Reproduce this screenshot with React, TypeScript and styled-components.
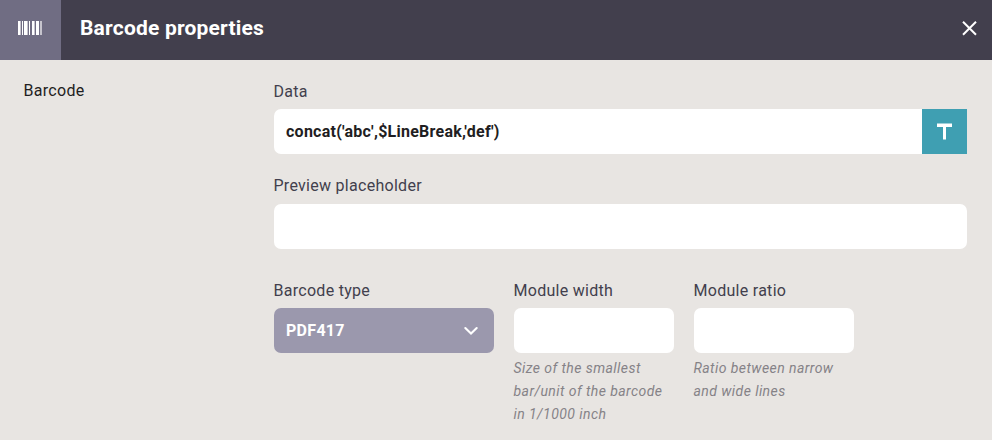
import React from "react";
import styled, { createGlobalStyle } from "styled-components";

const GlobalStyle = createGlobalStyle`
  *, *::before, *::after { box-sizing: border-box; }
  body { margin: 0; background: #e8e5e2; font-family: Roboto, sans-serif; overflow: hidden; }
`;

const Dialog = styled.div`
  height: 440px;
  background: #e8e5e2;
  color: #423f4d;
`;

const Header = styled.header`
  display: flex;
  align-items: center;
  height: 60px;
  background: #423f4d;
  color: #fff;
`;

const HeaderIcon = styled.div`
  display: flex;
  align-items: center;
  width: 61px;
  height: 60px;
  padding: 0 0 4px 18px;
  background: #706d83;
`;

const Title = styled.h1`
  flex: 1;
  margin: 0;
  padding: 0 0 4px 19px;
  font-size: 21px;
  line-height: 28px;
  font-weight: 700;
  letter-spacing: 0.2px;
`;

const CloseButton = styled.button`
  display: flex;
  margin: 0 15px 4px 0;
  padding: 0;
  border: 0;
  background: none;
  color: #fff;
`;

const Body = styled.main`
  display: grid;
  grid-template-columns: 250px 693px;
  padding: 21px 0 0 24px;
`;

const SectionName = styled.div`
  margin-left: -0.5px;
  font-size: 16px;
  line-height: 20px;
  letter-spacing: 0.3px;
  color: #1f1e22;
`;

const Field = styled.div<{ $width?: number; $gap?: number }>`
  width: ${(p) => (p.$width ? `${p.$width}px` : "100%")};
  margin-bottom: ${(p) => p.$gap ?? 0}px;
`;

const Label = styled.label<{ $space?: number }>`
  display: block;
  margin: 0 0 ${(p) => p.$space ?? 7}px -0.5px;
  padding-top: 1px;
  font-size: 16px;
  line-height: 20px;
  letter-spacing: 0.28px;
`;

const InputGroup = styled.div`
  display: flex;
`;

const Input = styled.input<{ $joined?: boolean }>`
  display: block;
  flex: 1;
  width: 100%;
  height: 45px;
  padding: 0 12px;
  border: 0;
  border-radius: ${(p) => (p.$joined ? "7px 0 0 7px" : "7px")};
  outline: 0;
  background: #fff;
  color: #1f1e22;
  font: 700 16px Roboto, sans-serif;
  letter-spacing: 0.26px;
`;

const TextButton = styled.button`
  display: flex;
  align-items: center;
  justify-content: center;
  width: 45px;
  height: 45px;
  padding: 0;
  border: 0;
  background: #3f9fb2;
`;

const Row = styled.div`
  display: flex;
  gap: 20px;
`;

const Select = styled.button`
  display: flex;
  align-items: center;
  justify-content: space-between;
  width: 100%;
  height: 45px;
  padding: 0 15px 0 12px;
  border: 0;
  border-radius: 7px;
  background: #9b98ad;
  color: #fff;
  font: 700 16px Roboto, sans-serif;
  letter-spacing: 0.3px;
`;

const Hint = styled.p`
  margin: 4px 0 0 -0.5px;
  font-size: 14px;
  line-height: 23px;
  font-style: italic;
  letter-spacing: 0.43px;
  color: #858287;
  white-space: nowrap;
`;

export default function App() {
  return (
    <Dialog>
      <GlobalStyle />
      <Header>
        <HeaderIcon>
          <svg width="24" height="14" viewBox="0 0 24 14" fill="#fff">
            <path d="M0 0h2v14H0zM4 0h1v14H4zM6 0h3v14H6zM11 0h1v14h-1zM14 0h2v14h-2zM18 0h3v14h-3z" />
            <path opacity=".6" d="M2 0h1v14H2zM9 0h1v14H9zM16 0h1v14h-1zM22 0h2v14h-2z" />
          </svg>
        </HeaderIcon>
        <Title>Barcode properties</Title>
        <CloseButton aria-label="Close">
          <svg width="15" height="15" viewBox="0 0 15 15" fill="none" stroke="currentColor" strokeWidth="2">
            <path d="M1 1l13 13M14 1L1 14" transform="translate(0 -.3)" />
          </svg>
        </CloseButton>
      </Header>
      <Body>
        <SectionName>Barcode</SectionName>
        <div>
          <Field $gap={21}>
            <Label>Data</Label>
            <InputGroup>
              <Input $joined defaultValue="concat('abc',$LineBreak,'def')" />
              <TextButton aria-label="Text">
                <svg width="15" height="17" viewBox="0 0 15 17" fill="#fff">
                  <path d="M0 .4h15v3.6H9v12.4H6V4H0z" />
                </svg>
              </TextButton>
            </InputGroup>
          </Field>
          <Field $gap={31}>
            <Label $space={8}>Preview placeholder</Label>
            <Input />
          </Field>
          <Row>
            <Field $width={220}>
              <Label>Barcode type</Label>
              <Select>
                PDF417
                <svg width="16" height="10" viewBox="0 0 16 10" fill="none" stroke="#fff" strokeWidth="2.1" strokeLinecap="round">
                  <path d="M2.3 2l5.7 5.6L13.7 2" />
                </svg>
              </Select>
            </Field>
            <Field $width={160}>
              <Label>Module width</Label>
              <Input />
              <Hint>Size of the smallest<br />bar/unit of the barcode<br />in 1/1000 inch</Hint>
            </Field>
            <Field $width={160}>
              <Label>Module ratio</Label>
              <Input />
              <Hint>Ratio between narrow<br />and wide lines</Hint>
            </Field>
          </Row>
        </div>
      </Body>
    </Dialog>
  );
}
